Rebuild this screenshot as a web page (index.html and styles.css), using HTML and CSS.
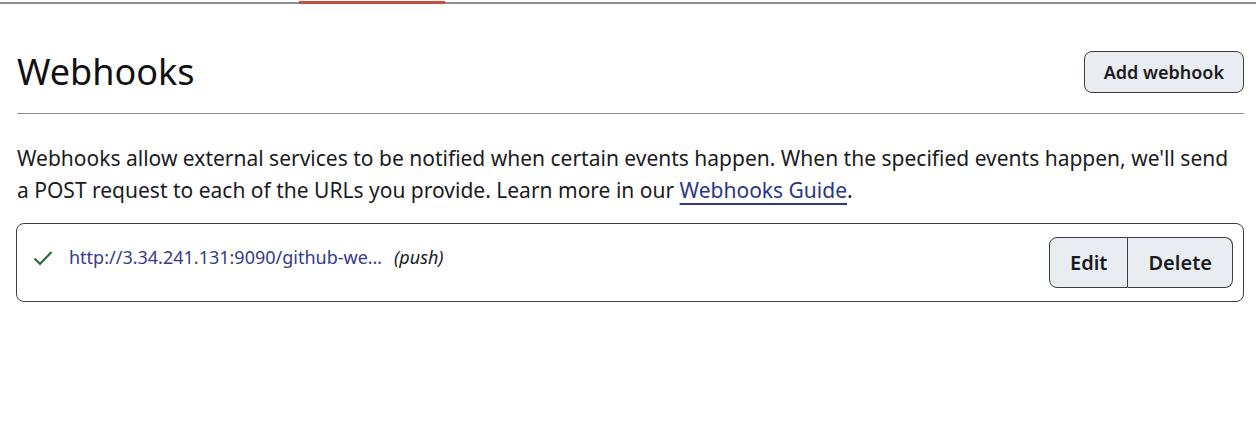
FILE: index.html
```html
<!DOCTYPE html>
<html lang="en">
<head>
<meta charset="utf-8">
<title>Webhooks</title>
<link rel="stylesheet" href="styles.css">
</head>
<body>
<div class="topbar"><span class="topbar-active"></span></div>
<main class="page">
  <div class="page-header">
    <h1 class="page-title">Webhooks</h1>
    <button class="btn btn-add" type="button">Add webhook</button>
  </div>
  <p class="intro">Webhooks allow external services to be notified when certain events happen. When the specified events happen, we'll send a POST request to each of the URLs you provide. Learn more in our <a class="guide-link" href="#">Webhooks Guide</a>.</p>
  <div class="hook-list">
    <div class="hook">
      <svg class="hook-check" width="20" height="16" viewBox="0 0 20 16" aria-hidden="true"><path d="M1.5 8.5 L7 14 L18.5 2" fill="none" stroke="#2f6a3a" stroke-width="2.2"/></svg>
      <a class="hook-url" href="#">http://3.34.241.131:9090/github-we…</a>
      <em class="hook-events">(push)</em>
      <div class="btn-group">
        <button class="btn btn-seg" type="button">Edit</button>
        <button class="btn btn-seg" type="button">Delete</button>
      </div>
    </div>
  </div>
</main>
</body>
</html>
```
FILE: styles.css
```css
html, body {
  margin: 0;
  padding: 0;
  background: #fff;
}
body {
  font-family: "Noto Sans", "Open Sans", sans-serif;
  color: #1b1b1f;
}
.topbar {
  height: 2px;
  margin-top: 2px;
  background: #8a8e96;
  position: relative;
}
.topbar-active {
  position: absolute;
  left: 299px;
  top: -1px;
  width: 146px;
  height: 3px;
  background: #c0503c;
}
.page {
  padding: 0 12px 0 17px;
}
.page-header {
  display: flex;
  align-items: center;
  justify-content: space-between;
  padding-top: 46px;
  padding-bottom: 19px;
  border-bottom: 1px solid #8b8e94;
}
.page-title {
  margin: 0;
  font-size: 36px;
  font-weight: 400;
  line-height: 44px;
  color: #111;
}
.btn {
  font-family: inherit;
  font-weight: 600;
  color: #1b1b1f;
  background: #e9ecf0;
  border: 1px solid #3b3d42;
  cursor: pointer;
}
.btn-add {
  height: 42px;
  padding: 0 19px;
  font-size: 18px;
  border-radius: 8px;
}
.intro {
  margin: 28px 0 17px;
  font-size: 21px;
  line-height: 32px;
}
.guide-link {
  color: #2c3785;
  text-decoration: underline;
  text-decoration-thickness: 2px;
  text-underline-offset: 5px;
}
.hook-list {
  border: 1px solid #3b3d42;
  border-radius: 8px;
  margin-left: -1px;
}
.hook {
  display: flex;
  align-items: flex-start;
  padding: 13px 10px 13px 16px;
}
.hook-check {
  margin-top: 13px;
  margin-right: 16px;
}
.hook-url {
  margin-top: 8px;
  font-size: 18px;
  color: #353b8a;
  text-decoration: none;
}
.hook-events {
  margin-top: 8px;
  margin-left: 12px;
  font-size: 18px;
  color: #1b1b1f;
}
.btn-group {
  margin-left: auto;
  display: flex;
}
.btn-seg {
  height: 51px;
  font-size: 20px;
  padding: 0 20px;
}
.btn-seg:first-child {
  border-radius: 8px 0 0 8px;
}
.btn-seg:last-child {
  border-left: none;
  border-radius: 0 8px 8px 0;
}
```
